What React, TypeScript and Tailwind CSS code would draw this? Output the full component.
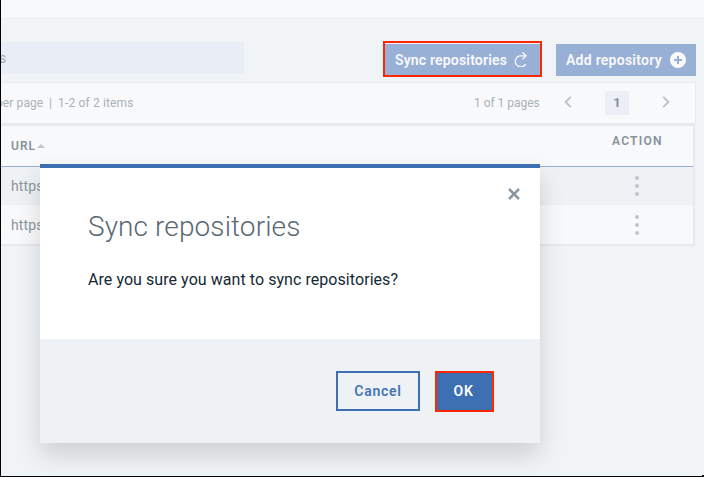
import React from "react";

function Dots() {
  return (
    <div className="flex w-1 flex-col gap-1">
      <span className="h-1 w-1 rounded-full bg-[#bdc6ce]" />
      <span className="h-1 w-1 rounded-full bg-[#bdc6ce]" />
      <span className="h-1 w-1 rounded-full bg-[#bdc6ce]" />
    </div>
  );
}

function Chevron({ d }: { d: string }) {
  return (
    <svg width="8" height="12" viewBox="0 0 8 12" fill="none" stroke="#b9c2ca" strokeWidth="1.8">
      <path d={d} />
    </svg>
  );
}

function Toolbar() {
  return (
    <div className="flex h-[65px] pt-6">
      <div className="mt-[1px] flex h-8 w-[243px] items-center bg-[#e9edf5] text-sm text-[#a1a9ae]">
        <span className="-ml-[2px]">s</span>
      </div>
      <div className="ml-[139px] flex h-9 w-[159px] items-center border-2 border-[#ff2600] bg-[#98b0d5] pl-[10px] text-sm font-semibold text-[#f8f9fb] shadow-[inset_0_1px_0_#eef2f8]">
        <span className="w-[112px] pt-[2px] whitespace-nowrap tracking-[0.18px]">Sync repositories</span>
        <svg className="ml-[7px]" width="14" height="16" viewBox="0 0 14 16" fill="none" stroke="#f8f9fb" strokeWidth="1.3">
          <path d="M11.6 13.2A5.5 5.5 0 1 1 7.2 4.8h4.6M8.4 1.2 12 4.8 8.4 8.4" />
        </svg>
      </div>
      <div className="mt-[3px] ml-[14px] flex h-8 w-[140px] items-center bg-[#98b0d5] pl-[10px] text-sm font-semibold text-[#f8f9fb]">
        <span className="w-[96px] whitespace-nowrap tracking-[0.26px]">Add repository</span>
        <svg className="ml-2" width="16" height="16" viewBox="0 0 16 16">
          <circle cx="8" cy="8" r="8" fill="#f8f9fb" />
          <path d="M8 4v8M4 8h8" stroke="#98b0d5" strokeWidth="2" />
        </svg>
      </div>
    </div>
  );
}

function Pagination() {
  return (
    <div className="flex h-[41px] w-[695px] items-center border-t border-r border-[#e7eaee] bg-[#f8f9fb] text-xs text-[#a9b2b8]">
      <div className="-ml-[5px] flex w-[478px] whitespace-nowrap">
        <span className="w-[47px] tracking-[0.1px]">per page</span>
        <span className="w-[15px] pl-[6px]">|</span>
        <span className="tracking-[0.16px]">1-2 of 2 items</span>
      </div>
      <span className="w-[65px] whitespace-nowrap tracking-[-0.02px]">1 of 1 pages</span>
      <div className="-mt-[3px] ml-[25px]">
        <Chevron d="M6.8.8 1.6 6l5.2 5.2" />
      </div>
      <span className="ml-[33px] flex h-6 w-6 items-center justify-center bg-[#eceff5] text-[13px] font-bold text-[#869097]">1</span>
      <div className="-mt-[3px] ml-[33px]">
        <Chevron d="M1.2.8 6.4 6l-5.2 5.2" />
      </div>
    </div>
  );
}

function Table() {
  return (
    <div className="w-[694px] border-t-[3px] border-r-2 border-b-2 border-[#e7e9ec] bg-[#f8f9fb] text-[#8c969c]">
      <div className="flex h-[41px] border-b border-[#98b0d5] text-xs font-semibold text-[#869299]">
        <div className="flex h-[39px] w-[610px] items-center pl-[10px] tracking-[1px]">
          <span className="w-[26px]">URL</span>
          <svg width="8" height="4" viewBox="0 0 8 4">
            <path d="M0 4 4 0l4 4Z" fill="#c0c8ce" />
          </svg>
        </div>
        <span className="pt-[7px] pl-[1px] tracking-[1.25px]">ACTION</span>
      </div>
      <div className="flex h-[38px] items-center bg-[#eef2f5] pl-[10px] text-sm">
        <span className="w-[624px] tracking-[0.1px]">https://</span>
        <Dots />
      </div>
      <div className="flex h-[39px] items-center pl-[10px] text-sm">
        <span className="w-[624px] tracking-[0.1px]">https://</span>
        <Dots />
      </div>
    </div>
  );
}

function Modal() {
  return (
    <div className="absolute top-[164px] left-10 flex h-[279px] w-[500px] flex-col border-t-4 border-[#3d70b2] bg-white shadow-[0_12px_24px_0_rgba(0,0,0,0.15)]">
      <div className="flex h-[171px] flex-col pl-12">
        <div className="flex">
          <h1 className="mt-[43px] w-[420px] text-[28px] leading-8 font-light tracking-[0.1px] text-[#5a6872]">Sync repositories</h1>
          <svg className="mt-[20px]" width="12" height="12" viewBox="0 0 12 12" stroke="#8897a2" strokeWidth="2.5">
            <path d="m1 1 10 10M11 1 1 11" />
          </svg>
        </div>
        <p className="mt-[25px] text-base leading-6 tracking-[0.06px] whitespace-nowrap text-[#152935]">Are you sure you want to sync repositories?</p>
      </div>
      <div className="flex flex-1 bg-[#eff2f5] pt-8 pl-[296px] text-sm font-semibold">
        <button className="h-10 w-[84px] border-2 border-[#3d70b2] tracking-[0.75px] text-[#4474b6]">Cancel</button>
        <button className="ml-[15px] h-[41px] w-[59px] border-2 border-[#ff2600] bg-[#3d70b2] pr-[2px] pb-[2px] tracking-[0.7px] text-white">OK</button>
      </div>
    </div>
  );
}

export default function App() {
  return (
    <div className="relative h-[477px] w-[704px] overflow-hidden border-b border-l border-black bg-[#f0f4f7] font-['Roboto','Liberation_Sans',sans-serif]">
      <div className="h-[17px] bg-[#f8f9fb]" />
      <Toolbar />
      <Pagination />
      <Table />
      <div className="absolute inset-y-0 right-0 -left-px">
        <Modal />
        <span className="absolute right-0 bottom-0 h-px w-[2px] bg-black" />
      </div>
    </div>
  );
}
